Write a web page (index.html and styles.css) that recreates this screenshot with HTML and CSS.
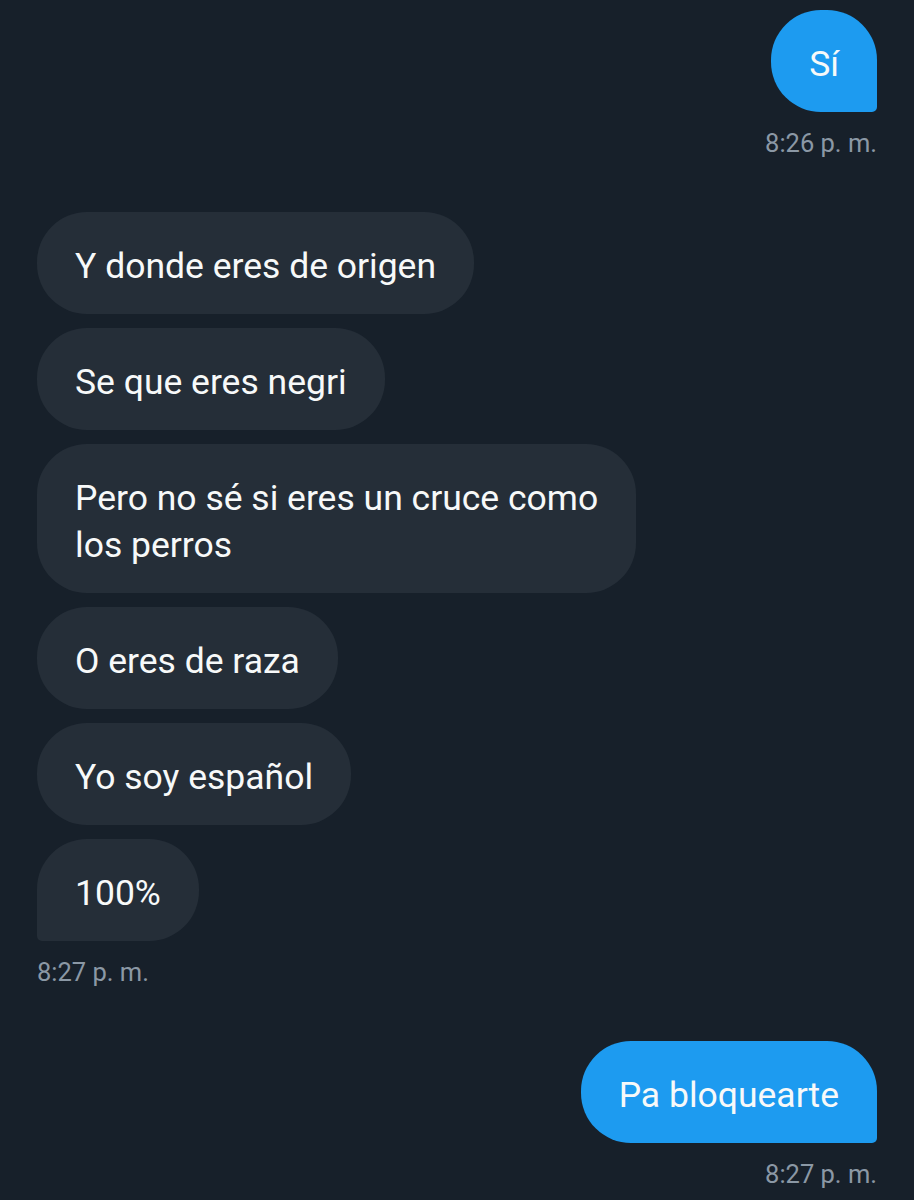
FILE: index.html
```html
<!DOCTYPE html>
<html lang="es">
<head>
    <meta charset="UTF-8">
    <title>Mensajes</title>
    <link rel="stylesheet" href="styles.css">
</head>
<body>
<div class="chat">
    <div class="group sent">
        <div class="bubble last">Sí</div>
        <div class="time">8:26 p. m.</div>
    </div>

    <div class="group received">
        <div class="bubble">Y donde eres de origen</div>
        <div class="bubble">Se que eres negri</div>
        <div class="bubble">Pero no sé si eres un cruce como<br>los perros</div>
        <div class="bubble">O eres de raza</div>
        <div class="bubble">Yo soy español</div>
        <div class="bubble last">100%</div>
        <div class="time">8:27 p. m.</div>
    </div>

    <div class="group sent">
        <div class="bubble last">Pa bloquearte</div>
        <div class="time">8:27 p. m.</div>
    </div>
</div>
</body>
</html>
```

FILE: styles.css
```css
body {
    margin: 0;
    background-color: #17202a;
    font-family: Roboto, "Noto Sans", sans-serif;
}

.chat {
    padding: 10px 37px;
    display: flex;
    flex-direction: column;
    gap: 55px;
}

.group {
    display: flex;
    flex-direction: column;
    gap: 14px;
}

.sent {
    align-items: flex-end;
}

.received {
    align-items: flex-start;
}

.bubble {
    color: #f7f9f9;
    font-size: 35.5px;
    line-height: 47px;
    padding: 31px 38px 24px;
    border-radius: 50px;
}

.sent .bubble {
    background-color: #1d9bf0;
}

.received .bubble {
    background-color: #252e38;
}

.sent .bubble.last {
    border-bottom-right-radius: 5px;
}

.received .bubble.last {
    border-bottom-left-radius: 5px;
}

.time {
    color: #8b98a5;
    font-size: 25.5px;
    line-height: 28px;
    margin-top: 3px;
}
```
